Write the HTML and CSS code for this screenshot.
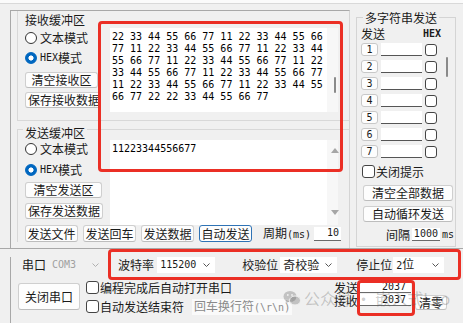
FILE: index.html
```html
<!DOCTYPE html>
<html lang="zh-CN">

<head>
    <meta charset="UTF-8">
    <meta name="viewport" content="width=device-width, initial-scale=1.0">
    <title>串口调试助手</title>
    <link rel="stylesheet" href="styles.css">
</head>

<body>
    <div class="topstrip"></div>

    <div class="main">
        <div class="bufpanel">
            <!-- 接收缓冲区 -->
            <div class="group recv">
                <div class="side">
                    <div class="legend">接收缓冲区</div>
                    <label class="radio"><span class="dot"></span>文本模式</label>
                    <label class="radio"><span class="dot on"></span><span class="mono">HEX</span>模式</label>
                    <button class="btn w-clear-r">清空接收区</button>
                    <button class="btn w-save-r">保存接收数据</button>
                </div>
                <div class="textbox recvbox">
<pre class="data">22 33 44 55 66 77 11 22 33 44 55 66
77 11 22 33 44 55 66 77 11 22 33 44
55 66 77 11 22 33 44 55 66 77 11 22
33 44 55 66 77 11 22 33 44 55 66 77
11 22 33 44 55 66 77 11 22 33 44 55
66 77 22 22 33 44 55 66 77</pre>
                    <div class="vscroll"><span class="thumb"></span></div>
                </div>
            </div>

            <!-- 发送缓冲区 -->
            <div class="group send">
                <div class="send-top">
                    <div class="side">
                        <div class="legend">发送缓冲区</div>
                        <label class="radio"><span class="dot"></span>文本模式</label>
                        <label class="radio second"><span class="dot on"></span><span class="mono">HEX</span>模式</label>
                        <button class="btn w-clear-s">清空发送区</button>
                        <button class="btn w-save-s">保存发送数据</button>
                    </div>
                    <div class="textbox sendbox">
                        <pre class="data">11223344556677</pre>
                        <div class="vscroll arrows"><span class="tri up"></span><span class="tri down"></span></div>
                    </div>
                </div>
                <div class="send-bar">
                    <button class="btn bar-btn">发送文件</button>
                    <button class="btn bar-btn">发送回车</button>
                    <button class="btn bar-btn">发送数据</button>
                    <button class="btn bar-btn active">自动发送</button>
                    <span class="period">周期<span class="mono">(ms)</span></span>
                    <span class="field period-val">10</span>
                </div>
            </div>
        </div>

        <!-- 多字符串发送 -->
        <div class="multi">
            <div class="legend">多字符串发送</div>
            <div class="multi-head"><span>发送</span><span class="mono hex">HEX</span></div>
            <div class="multi-list">
                <div class="rows">
                    <div class="mrow"><span class="nbtn">1</span><span class="minput"></span><span class="check"></span></div>
                    <div class="mrow"><span class="nbtn">2</span><span class="minput"></span><span class="check"></span></div>
                    <div class="mrow"><span class="nbtn">3</span><span class="minput"></span><span class="check"></span></div>
                    <div class="mrow"><span class="nbtn">4</span><span class="minput"></span><span class="check"></span></div>
                    <div class="mrow"><span class="nbtn">5</span><span class="minput"></span><span class="check"></span></div>
                    <div class="mrow"><span class="nbtn">6</span><span class="minput"></span><span class="check"></span></div>
                    <div class="mrow"><span class="nbtn">7</span><span class="minput"></span><span class="check"></span></div>
                </div>
                <div class="mscroll"><span class="thumb"></span></div>
            </div>
            <label class="chk close-tip"><span class="check"></span>关闭提示</label>
            <button class="btn wide first">清空全部数据</button>
            <button class="btn wide">自动循环发送</button>
            <div class="interval">间隔<span class="field int-val">1000</span><span class="mono">ms</span></div>
        </div>
    </div>

    <!-- 串口设置 -->
    <div class="bottom">
        <div class="port-row">
            <span class="lbl">串口</span>
            <span class="mono com">COM3</span>
            <svg class="chev faint" width="7" height="4" viewBox="0 0 7 4"><polyline points="0.5,0.5 3.5,3.5 6.5,0.5" fill="none" stroke="currentColor" stroke-width="1"/></svg>
            <span class="lbl baud-l">波特率</span>
            <span class="select baud"><span class="mono">115200</span><svg class="chev" width="7" height="4" viewBox="0 0 7 4"><polyline points="0.5,0.5 3.5,3.5 6.5,0.5" fill="none" stroke="currentColor" stroke-width="1"/></svg></span>
            <span class="lbl parity-l">校验位</span>
            <span class="select parity"><span>奇校验</span><svg class="chev" width="7" height="4" viewBox="0 0 7 4"><polyline points="0.5,0.5 3.5,3.5 6.5,0.5" fill="none" stroke="currentColor" stroke-width="1"/></svg></span>
            <span class="lbl stop-l">停止位</span>
            <span class="select stop"><span><span class="mono">2</span>位</span><svg class="chev" width="7" height="4" viewBox="0 0 7 4"><polyline points="0.5,0.5 3.5,3.5 6.5,0.5" fill="none" stroke="currentColor" stroke-width="1"/></svg></span>
        </div>
        <div class="ctrl-row">
            <button class="btn close-port">关闭串口</button>
            <div class="checks">
                <label class="chk"><span class="check"></span>编程完成后自动打开串口</label>
                <label class="chk second"><span class="check"></span>自动发送结束符<span class="ending">回车换行符<span class="mono">(\r\n)</span></span></label>
            </div>
            <div class="counters">
                <span class="clbl">发送</span><span class="field count">2037</span>
                <span class="clbl">接收</span><span class="field count">2037</span>
            </div>
            <button class="btn zero">清零</button>
        </div>
    </div>
    <div class="footer"></div>

    <!-- 标注框 -->
    <div class="mark mark-buf"></div>
    <div class="mark mark-port"></div>
    <div class="mark mark-count"></div>

    <div class="watermark">
        <svg width="18" height="16" viewBox="0 0 18 16">
            <ellipse cx="7" cy="6.5" rx="6.5" ry="5.5" fill="currentColor"/>
            <path d="M3 10 L2.5 13.5 L6.5 11.5 Z" fill="currentColor"/>
            <ellipse cx="12" cy="10.5" rx="5.5" ry="4.5" fill="currentColor" stroke="#f0f0f0" stroke-width="1"/>
            <circle cx="4.8" cy="5" r="0.9" fill="#f0f0f0"/>
            <circle cx="9" cy="5" r="0.9" fill="#f0f0f0"/>
        </svg>
        <span>公众号 · 嵌入式Leo</span>
    </div>
</body>

</html>
```

FILE: styles.css
```css
* {
    box-sizing: border-box;
}

body {
    margin: 0;
    width: 463px;
    height: 323px;
    overflow: hidden;
    position: relative;
    background-color: #f0f0f0;
    color: #1a1a1a;
    font-family: "Noto Sans CJK SC", sans-serif;
    font-size: 12px;
    line-height: 14px;
}

.mono {
    font-family: "DejaVu Sans Mono", monospace;
    font-size: 10px;
}

.topstrip {
    height: 4px;
    background-color: #fbfbfb;
    border-bottom: 1px solid #d9d9d9;
}

.main {
    display: flex;
    height: 239px;
    margin-top: 6px;
    padding-left: 10px;
    border-bottom: 1px solid #a8a8a8;
}

.bufpanel {
    width: 340px;
    border-top: 1px solid #a8a8a8;
    border-left: 1px solid #a8a8a8;
    border-right: 1px solid #d4d4d4;
    padding-left: 6px;
}

.group {
    border-left: 1px solid #d8d8d8;
}

.recv {
    display: flex;
    height: 110px;
    border-bottom: 1px solid #d8d8d8;
}

.side {
    width: 92px;
    padding-left: 7px;
    display: flex;
    flex-direction: column;
    align-items: flex-start;
}

.legend {
    height: 15px;
    margin-top: 2px;
    padding: 0 2px;
    margin-left: -2px;
    background-color: #f0f0f0;
    white-space: nowrap;
}

.radio {
    display: flex;
    align-items: center;
    height: 20px;
    white-space: nowrap;
}

.dot {
    width: 12px;
    height: 12px;
    margin-right: 3px;
    border: 1px solid #333;
    border-radius: 50%;
    background-color: #fff;
}

.dot.on {
    border-color: #0067c0;
    background: radial-gradient(circle, #fff 0 2.3px, #0067c0 2.8px);
}

.btn {
    height: 16px;
    padding: 0 2px;
    font-family: inherit;
    font-size: 12px;
    line-height: 14px;
    color: #1a1a1a;
    background-color: #fdfdfd;
    border: 1px solid #cfcfcf;
    border-bottom-color: #bdbdbd;
    border-radius: 3px;
    white-space: nowrap;
    overflow: hidden;
}

.w-clear-r {
    width: 73px;
    margin-top: 4px;
}

.w-save-r {
    width: 76px;
    margin-top: 4px;
    text-align: left;
}

.textbox {
    display: flex;
    width: 228px;
}

.recvbox {
    margin-top: 17px;
    height: 84px;
}

.data {
    flex: 1;
    margin: 0;
    padding: 3px 2px;
    background-color: #fff;
    color: #000;
    font-family: "DejaVu Sans Mono", monospace;
    font-size: 10px;
    line-height: 12px;
    overflow: hidden;
}

.vscroll {
    width: 11px;
    background-color: #f7f7f7;
    padding: 49px 0 0 7px;
}

.thumb {
    display: block;
    width: 2px;
    height: 16px;
    background-color: #8a8a8a;
    border-radius: 1px;
}

.vscroll.arrows {
    padding: 8px 0 10px 4px;
    display: flex;
    flex-direction: column;
    justify-content: space-between;
}

.tri {
    width: 0;
    height: 0;
    border-left: 4px solid transparent;
    border-right: 4px solid transparent;
}

.tri.up {
    border-bottom: 5px solid #a6a6a6;
}

.tri.down {
    border-top: 5px solid #a6a6a6;
}

.send {
    margin-top: 8px;
    border-top: 1px solid #d8d8d8;
}

.send-top {
    display: flex;
    height: 95px;
}

.send .legend {
    height: 13px;
    margin-top: -4px;
    line-height: 13px;
}

.radio.second {
    margin-top: 1px;
}

.w-clear-s {
    width: 77px;
    margin-top: 2px;
}

.w-save-s {
    width: 78px;
    margin-top: 5px;
}

.sendbox {
    margin-top: 10px;
    height: 85px;
}

.send-bar {
    display: flex;
    align-items: center;
    height: 17px;
    padding-left: 7px;
}

.bar-btn {
    width: 53px;
    height: 17px;
    margin-right: 5px;
    padding: 0;
}

.btn.active {
    border-color: #2f73b5;
}

.period {
    margin-left: 6px;
    white-space: nowrap;
}

.field {
    background-color: #fff;
    border-bottom: 1px solid #6a6a6a;
    text-align: right;
    font-family: "DejaVu Sans Mono", monospace;
    font-size: 10px;
    line-height: 12px;
}

.period-val {
    width: 27px;
    height: 14px;
    margin-left: 3px;
    padding-right: 2px;
}

/* 多字符串发送 */
.multi {
    width: 100px;
    height: 230px;
    margin-left: 6px;
    margin-top: 7px;
    padding-left: 4px;
    border: 1px solid #d4d4d4;
    display: flex;
    flex-direction: column;
    align-items: flex-start;
}

.multi .legend {
    height: 14px;
    margin-top: -7px;
    margin-left: 2px;
}

.multi-head {
    display: flex;
    justify-content: space-between;
    align-items: center;
    width: 80px;
    height: 13px;
    margin-top: 2px;
}

.multi-head .hex {
    font-weight: bold;
}

.multi-list {
    display: flex;
    margin-top: 3px;
}

.rows {
    display: flex;
    flex-direction: column;
    gap: 4px;
}

.mrow {
    display: flex;
    align-items: center;
    height: 13px;
}

.nbtn {
    width: 17px;
    height: 13px;
    border: 1px solid #c8c8c8;
    border-radius: 3px;
    background-color: #fdfdfd;
    font-family: "DejaVu Sans Mono", monospace;
    font-size: 10px;
    line-height: 11px;
    text-align: center;
}

.minput {
    width: 41px;
    height: 13px;
    margin-left: 3px;
    background-color: #fff;
    border-bottom: 1px solid #555;
}

.check {
    width: 12px;
    height: 12px;
    margin-left: 3px;
    border: 1px solid #444;
    border-radius: 3px;
    background-color: #fff;
}

.mscroll {
    margin-left: 9px;
    padding-top: 14px;
}

.mscroll .thumb {
    height: 20px;
}

.chk {
    display: flex;
    align-items: center;
    height: 13px;
    white-space: nowrap;
}

.chk .check {
    width: 13px;
    height: 13px;
    margin-left: 0;
    margin-right: 1px;
}

.close-tip {
    margin-top: 7px;
    margin-left: 1px;
}

.btn.wide {
    width: 90px;
    margin-left: 2px;
    margin-top: 5px;
}

.btn.wide.first {
    margin-top: 7px;
}

.interval {
    display: flex;
    align-items: center;
    align-self: flex-end;
    height: 13px;
    margin-top: 6px;
    padding-right: 1px;
}

.int-val {
    width: 28px;
    height: 13px;
    margin-left: 2px;
    padding-right: 2px;
}

.interval .mono {
    margin-left: 2px;
}

/* 串口设置 */
.bottom {
    height: 69px;
    margin-left: 10px;
    border-left: 1px solid #a8a8a8;
    border-bottom: 1px solid #a8a8a8;
}

.port-row {
    display: flex;
    align-items: center;
    height: 16px;
    margin-top: 8px;
    padding-left: 11px;
}

.lbl {
    white-space: nowrap;
}

.com {
    margin-left: 6px;
    color: #a0a0a0;
}

.chev {
    color: #555;
    flex: none;
}

.chev.faint {
    margin-left: 16px;
    color: #b0b0b0;
}

.baud-l {
    margin-left: 19px;
}

.select {
    display: flex;
    align-items: center;
    justify-content: space-between;
    height: 16px;
    padding: 0 5px 0 3px;
    background-color: #fff;
    white-space: nowrap;
}

.baud {
    width: 58px;
    margin-left: 3px;
}

.parity-l {
    margin-left: 27px;
}

.parity {
    width: 57px;
    margin-left: 2px;
}

.stop-l {
    margin-left: 19px;
}

.stop {
    width: 51px;
    margin-left: 1px;
}

.ctrl-row {
    display: flex;
    align-items: flex-start;
    margin-top: 8px;
}

.close-port {
    width: 62px;
    height: 27px;
    margin-left: 7px;
    margin-top: 2px;
}

.checks {
    width: 245px;
    margin-left: 6px;
    display: flex;
    flex-direction: column;
}

.chk.second {
    margin-top: 6px;
}

.ending {
    margin-left: 8px;
    padding: 0 2px;
    color: #8a8a8a;
    background-color: #fafafa;
}

.counters {
    display: grid;
    grid-template-columns: 24px 52px;
    grid-template-rows: 13px 13px;
    column-gap: 1px;
    margin-left: 3px;
}

.clbl {
    white-space: nowrap;
    line-height: 13px;
}

.count {
    height: 12px;
    padding-right: 5px;
}

.btn.zero {
    width: 32px;
    height: 15px;
    margin-left: 4px;
    margin-top: 14px;
    padding: 0;
}

.footer {
    height: 5px;
    background-color: #fff;
}

/* overlays */
.mark {
    position: absolute;
    border: 3px solid #eb2f25;
    border-radius: 4px;
}

.mark-buf {
    left: 98px;
    top: 21px;
    width: 245px;
    height: 151px;
}

.mark-port {
    left: 108px;
    top: 249px;
    width: 353px;
    height: 31px;
}

.mark-count {
    left: 357px;
    top: 280px;
    width: 58px;
    height: 36px;
}

.watermark {
    position: absolute;
    left: 283px;
    top: 289px;
    display: flex;
    align-items: center;
    gap: 3px;
    color: rgba(90, 90, 90, 0.3);
    font-size: 16px;
    line-height: 18px;
    white-space: nowrap;
}
```
